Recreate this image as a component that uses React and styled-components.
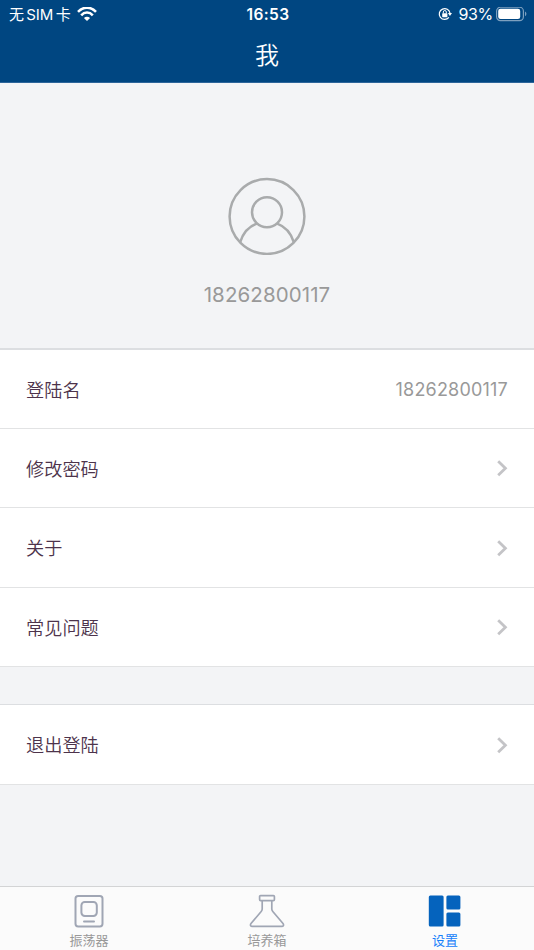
import React from 'react';
import styled, { createGlobalStyle } from 'styled-components';

const GlobalStyle = createGlobalStyle`
  * {
    box-sizing: border-box;
  }
  body {
    margin: 0;
    background: #f3f4f6;
    font-family: Inter, 'Noto Sans CJK SC', sans-serif;
  }
  svg {
    display: block;
  }
`;

const Screen = styled.div`
  display: flex;
  flex-direction: column;
  height: 950px;
  overflow: hidden;
  background: #f3f4f6;
`;

const Header = styled.header`
  height: 83px;
  flex: none;
  color: #fff;
  background: #004681;
  border-bottom: 1px solid #2c659a;
`;

const StatusBar = styled.div`
  display: grid;
  grid-template-columns: 1fr auto 1fr;
  align-items: center;
  height: 28px;
  padding: 0 7px 0 9px;
  font-size: 16px;
  line-height: 28px;
`;

const StatusGroup = styled.div`
  display: flex;
  align-items: center;
  justify-content: ${props => (props.$end ? 'flex-end' : 'flex-start')};
`;

const Carrier = styled.span`
  margin-right: 6px;
  padding-top: 1px;
  font-size: 15px;
  line-height: 27px;
  word-spacing: -2px;
  white-space: nowrap;
`;

const Clock = styled.span`
  padding-top: 1px;
  font-size: 15.5px;
  font-weight: 600;
  line-height: 27px;
  letter-spacing: 0.35px;
`;

const Percent = styled.span`
  margin: 0 3px 0 6px;
  font-size: 16px;
  letter-spacing: -0.3px;
`;

const Title = styled.h1`
  margin: 0;
  font-size: 24px;
  font-weight: 350;
  line-height: 55px;
  text-align: center;
`;

const Profile = styled.section`
  display: flex;
  flex-direction: column;
  align-items: center;
  height: 265px;
  flex: none;
  padding-top: 94px;
`;

const ProfileName = styled.p`
  margin: 24px 0 0;
  color: #999;
  font-size: 20.5px;
  line-height: 31px;
  letter-spacing: 0.1px;
`;

const Menu = styled.ul`
  flex: none;
  margin: 0 0 ${props => props.$gap || 0}px;
  padding: 0;
  list-style: none;
  background: #fff;
  border-top: ${props => props.$line || 1}px solid #dcdee1;
`;

const MenuItem = styled.li`
  display: flex;
  align-items: center;
  justify-content: space-between;
  height: ${props => props.$height || 79}px;
  padding: 0 26px;
  border-bottom: 1px solid #e2e3e4;
`;

const MenuLabel = styled.span`
  padding-bottom: 1px;
  color: #4d334b;
  font-size: 18.2px;
  font-weight: 350;
`;

const MenuValue = styled.span`
  color: #999;
  font-size: 18px;
  letter-spacing: 0.2px;
`;

const TabBar = styled.nav`
  display: grid;
  grid-template-columns: repeat(3, 1fr);
  height: 64px;
  flex: none;
  margin-top: auto;
  background: #fbfbfb;
  border-top: 1px solid #d3d4d5;
`;

const Tab = styled.div`
  display: flex;
  flex-direction: column;
  align-items: center;
  padding-top: 6px;
  color: ${props => (props.$active ? '#1780fa' : '#999')};
  font-size: 13px;
  line-height: 20px;

  span {
    margin-top: 1px;
  }
`;

const WifiIcon = () => (
  <svg width="20" height="15" viewBox="0 0 20 15" fill="none" stroke="#fff" strokeWidth="2.5">
    <path d="M1 4.9C6-.7 14-.7 19 4.9" />
    <path d="M4.2 8.3c3.3-3.7 8.3-3.7 11.6 0" />
    <path d="M10 14l-3.1-3.1c1.7-1.7 4.5-1.7 6.2 0z" fill="#fff" stroke="none" />
  </svg>
);

const RotationLockIcon = () => (
  <svg width="14" height="14" viewBox="0 0 14 14" fill="none" stroke="#fff">
    <path d="M10.9 10.4A5.4 5.4 0 1 1 12 6.2" strokeWidth="1.2" />
    <path d="M9.9 6.1H14L11.9 9z" fill="#fff" stroke="none" />
    <rect x="4.2" y="6.2" width="5.2" height="4" rx=".6" fill="#fff" stroke="none" />
    <path d="M5.3 6.4V5a1.5 1.5 0 0 1 3 0v1.4" strokeWidth="1" />
  </svg>
);

const BatteryIcon = () => (
  <svg width="31" height="15" viewBox="0 0 31 15">
    <rect x=".6" y=".2" width="26.8" height="13.4" rx="3.8" fill="none" stroke="#7da0bf" strokeWidth="1.2" />
    <rect x="2.2" y="1.8" width="22" height="10.2" rx="2.3" fill="#fff" />
    <path d="M29 4.6v4.6c1.9-.8 1.9-3.8 0-4.6z" fill="#7da0bf" />
  </svg>
);

const AvatarIcon = () => (
  <svg width="78" height="78" viewBox="0 0 78 78" fill="none" stroke="#a9abac" strokeWidth="2.5">
    <circle cx="39" cy="39.5" r="37.4" />
    <circle cx="39" cy="35.2" r="15" />
    <path d="M12.2 65.2C15 56 20.5 49.6 28.8 46.6M49.2 46.6C57.5 49.6 63 56 65.8 65.2" />
  </svg>
);

const ChevronIcon = () => (
  <svg width="12" height="18" viewBox="0 0 12 18" fill="none" stroke="#c4c4c7" strokeWidth="2.8">
    <path d="M2.2 2.2L9.4 9.2l-7.2 7" />
  </svg>
);

const ShakerIcon = () => (
  <svg width="36" height="36" viewBox="0 0 36 36" fill="none" stroke="#a0a6b4" strokeWidth="2">
    <rect x="4.5" y="3" width="27" height="30.4" rx="2.6" />
    <rect x="10.4" y="9" width="15.4" height="14" rx="3.4" />
    <path d="M13 28.4h10" strokeLinecap="round" />
  </svg>
);

const FlaskIcon = () => (
  <svg width="36" height="36" viewBox="0 0 36 36" fill="none" stroke="#a0a6b4" strokeWidth="1.7">
    <rect x="10.6" y="2.6" width="14.8" height="5" rx="1" />
    <path d="M13.2 7.8V16c0 1-.3 1.7-1 2.5L2.2 30.3c-1.3 1.6-.8 3.1 1.2 3.1h29.2c2 0 2.5-1.5 1.2-3.1L23.8 18.5c-.7-.8-1-1.5-1-2.5V7.8" />
  </svg>
);

const SettingsIcon = () => (
  <svg width="36" height="36" viewBox="0 0 36 36" fill="#0563bd">
    <rect x="1.8" y="2.4" width="14.8" height="31" rx="1.5" />
    <rect x="19.4" y="2.4" width="14" height="14" rx="1.5" />
    <rect x="19.4" y="19.4" width="14" height="14" rx="1.5" />
  </svg>
);

const phone = '18262800117';

const accountItems = [
  { label: '登陆名', value: phone },
  { label: '修改密码' },
  { label: '关于', height: 80 },
  { label: '常见问题' },
];

const tabs = [
  { label: '振荡器', icon: <ShakerIcon /> },
  { label: '培养箱', icon: <FlaskIcon /> },
  { label: '设置', icon: <SettingsIcon />, active: true },
];

const App = () => {
  return (
    <>
      <GlobalStyle />
      <Screen>
        <Header>
          <StatusBar>
            <StatusGroup>
              <Carrier>无 SIM 卡</Carrier>
              <WifiIcon />
            </StatusGroup>
            <Clock>16:53</Clock>
            <StatusGroup $end>
              <RotationLockIcon />
              <Percent>93%</Percent>
              <BatteryIcon />
            </StatusGroup>
          </StatusBar>
          <Title>我</Title>
        </Header>
        <Profile>
          <AvatarIcon />
          <ProfileName>{phone}</ProfileName>
        </Profile>
        <Menu $line={2} $gap={37}>
          {accountItems.map(item => (
            <MenuItem key={item.label} $height={item.height}>
              <MenuLabel>{item.label}</MenuLabel>
              {item.value ? <MenuValue>{item.value}</MenuValue> : <ChevronIcon />}
            </MenuItem>
          ))}
        </Menu>
        <Menu>
          <MenuItem $height={80}>
            <MenuLabel>退出登陆</MenuLabel>
            <ChevronIcon />
          </MenuItem>
        </Menu>
        <TabBar>
          {tabs.map(tab => (
            <Tab key={tab.label} $active={tab.active}>
              {tab.icon}
              <span>{tab.label}</span>
            </Tab>
          ))}
        </TabBar>
      </Screen>
    </>
  );
};

export default App;
